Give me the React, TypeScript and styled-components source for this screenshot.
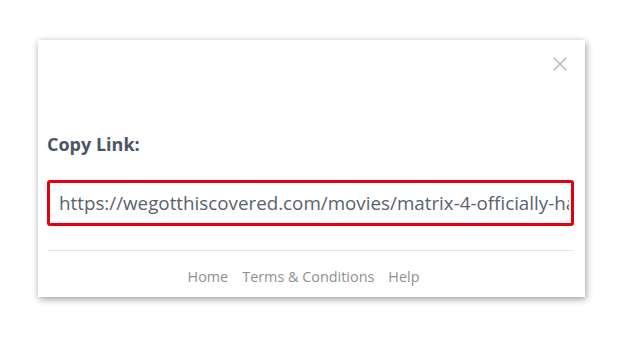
import React from 'react';
import styled, {createGlobalStyle} from 'styled-components';

const GlobalStyle = createGlobalStyle`
  html, body {
    margin: 0;
    padding: 0;
    background: #fff;
    font-family: "Open Sans", "Noto Sans", sans-serif;
  }
`

const Page = styled.div`
  width: 619px;
  height: 337px;
  padding: 40px 0 0 38px;
  box-sizing: border-box;
`

const Card = styled.div`
  position: relative;
  width: 547px;
  height: 257px;
  box-sizing: border-box;
  background: #fff;
  padding: 92px 11px 0 9px;
  box-shadow: 1px 2px 7px rgba(0, 0, 0, 0.4);
  display: flex;
  flex-direction: column;
`

const CloseButton = styled.button`
  position: absolute;
  top: 16px;
  right: 17px;
  width: 16px;
  height: 16px;
  padding: 0;
  border: none;
  background: transparent;
  cursor: pointer;
  color: #bcbcbc;
`

const Label = styled.h3`
  margin: 0;
  font-size: 18px;
  line-height: 24px;
  font-weight: 700;
  color: #4b5565;
`

const LinkInput = styled.input`
  margin-top: 24px;
  height: 46px;
  box-sizing: border-box;
  border: 3px solid #e4000f;
  border-radius: 3px;
  padding: 0 2px 0 9px;
  font-family: inherit;
  font-size: 18.8px;
  color: #5a6170;
  outline: none;
`

const Divider = styled.hr`
  margin: 24px 0 0 1px;
  border: none;
  border-top: 1px solid #e6e6e6;
`

const Footer = styled.nav`
  display: flex;
  justify-content: center;
  gap: 14px;
  padding: 16px 14px 0 0;
`

const FooterLink = styled.a`
  font-size: 14.4px;
  line-height: 20px;
  color: #909090;
  text-decoration: none;
`

const links = ['Home', 'Terms & Conditions', 'Help'];

const App: React.FC = () => {
    return (
        <Page>
            <GlobalStyle/>
            <Card>
                <CloseButton aria-label="close">
                    <svg width="16" height="16" viewBox="0 0 16 16">
                        <path d="M1.5 1.5 L14.5 14.5 M14.5 1.5 L1.5 14.5" stroke="currentColor" strokeWidth="1.6"/>
                    </svg>
                </CloseButton>
                <Label>Copy Link:</Label>
                <LinkInput
                    readOnly
                    value="https://wegotthiscovered.com/movies/matrix-4-officially-has-a-title"
                />
                <Divider/>
                <Footer>
                    {links.map(l => <FooterLink key={l} href="#">{l}</FooterLink>)}
                </Footer>
            </Card>
        </Page>
    )
};

export default App;
